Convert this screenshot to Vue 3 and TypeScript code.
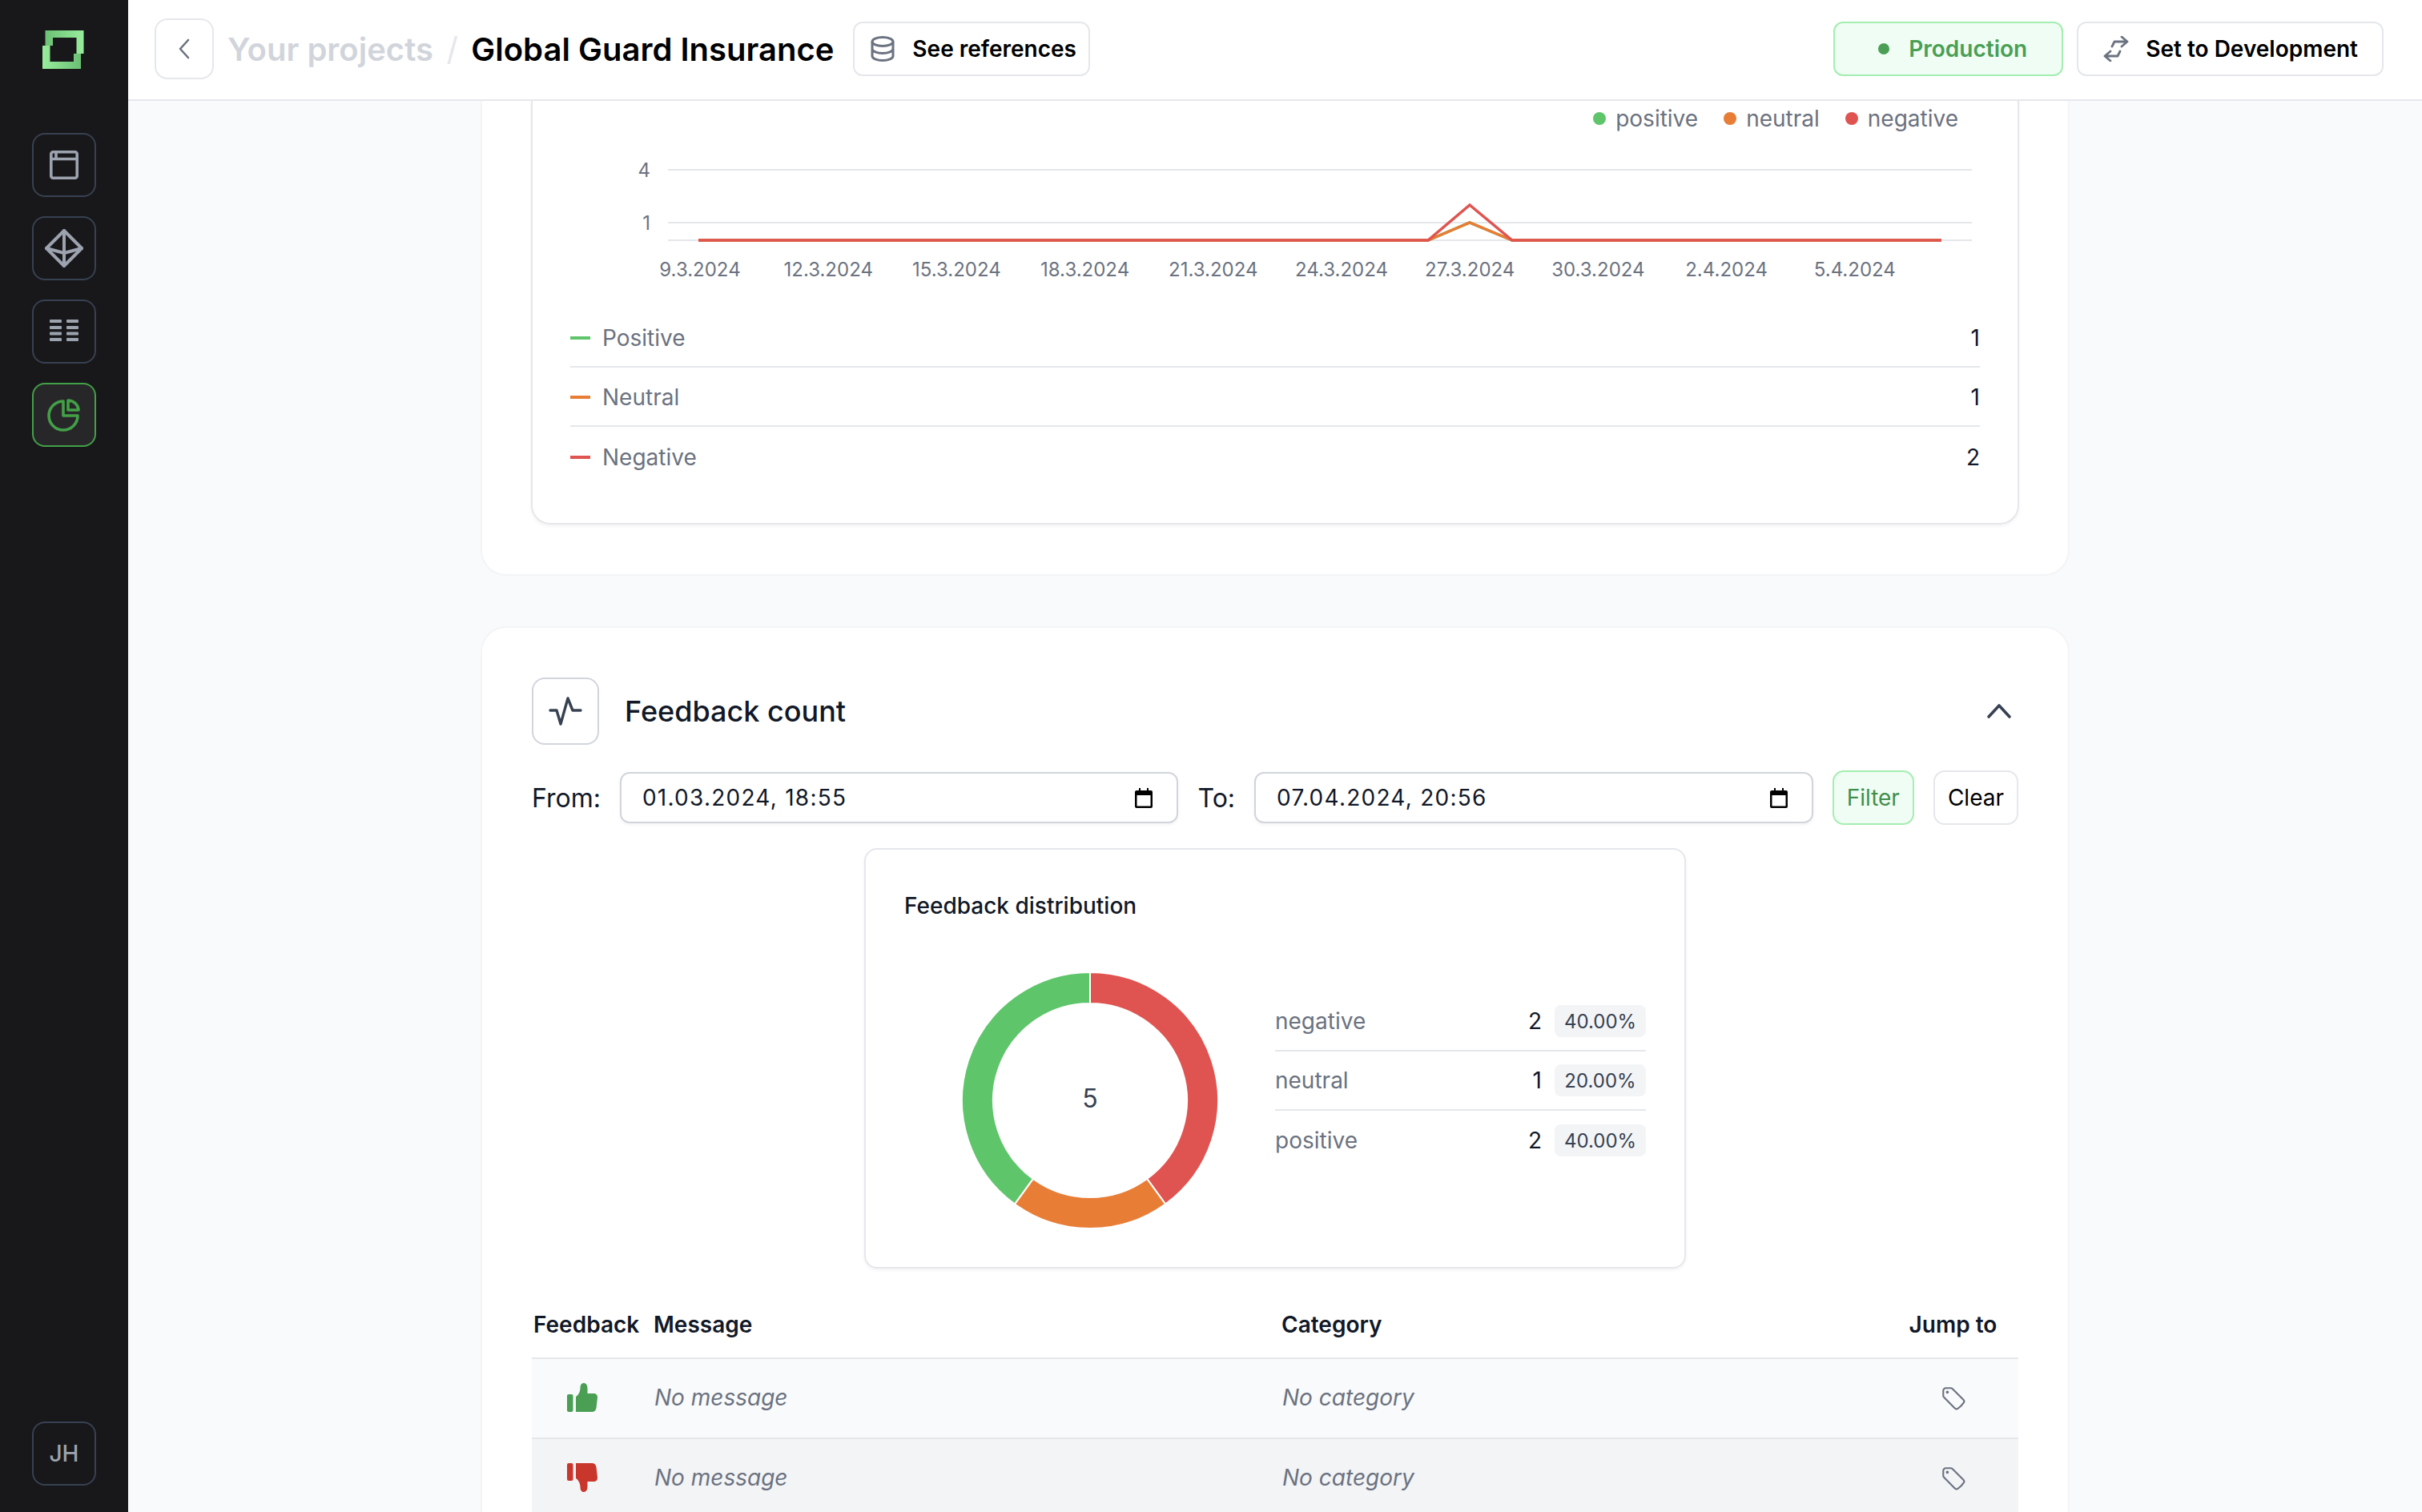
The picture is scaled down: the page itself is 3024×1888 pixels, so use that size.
<script setup lang="ts">
interface Sentiment { label: string; name: string; color: string; count: number }

const sentiments: Sentiment[] = [
  { label: 'Positive', name: 'positive', color: '#5fc56b', count: 1 },
  { label: 'Neutral', name: 'neutral', color: '#e87d36', count: 1 },
  { label: 'Negative', name: 'negative', color: '#df5450', count: 2 },
]

const ticks = ['9.3.2024', '12.3.2024', '15.3.2024', '18.3.2024', '21.3.2024', '24.3.2024', '27.3.2024', '30.3.2024', '2.4.2024', '5.4.2024']
const tickX = (i: number) => 162 + i * 160.2

const distribution = [
  { name: 'negative', count: 2, pct: '40.00%' },
  { name: 'neutral', count: 1, pct: '20.00%' },
  { name: 'positive', count: 2, pct: '40.00%' },
]

// donut segments, clockwise from 12 o'clock
function arc(from: number, to: number) {
  const R = 160
  const r = 121
  const p = (a: number, l: number) => {
    const t = ((a - 90) * Math.PI) / 180
    return `${(160 + l * Math.cos(t)).toFixed(2)} ${(160 + l * Math.sin(t)).toFixed(2)}`
  }
  const big = to - from > 180 ? 1 : 0
  return `M${p(from, R)} A${R} ${R} 0 ${big} 1 ${p(to, R)} L${p(to, r)} A${r} ${r} 0 ${big} 0 ${p(from, r)} Z`
}
const segments = [
  { color: '#df5450', d: arc(0, 144) },
  { color: '#e87d36', d: arc(144, 216) },
  { color: '#5fc56b', d: arc(216, 360) },
]

const feedback = [
  { up: true },
  { up: false },
]
</script>

<template>
  <div class="app">
    <aside class="sidebar">
      <svg class="logo" width="52" height="48" viewBox="0 0 52 48">
        <defs>
          <linearGradient id="lg1" x1="0" x2="1" y1="0" y2="0">
            <stop offset="0" stop-color="#6cc074" />
            <stop offset="1" stop-color="#98ec9c" />
          </linearGradient>
          <linearGradient id="lg2" x1="0" x2="1" y1="0" y2="0">
            <stop offset="0" stop-color="#98ec9c" />
            <stop offset="1" stop-color="#6cc074" />
          </linearGradient>
        </defs>
        <path fill="url(#lg1)" d="M3.5 0H51.5V29H42.5V9H13V19H3.5Z" />
        <path fill="url(#lg2)" d="M0 19H9.5V39H39V29H48V48H0Z" />
      </svg>
      <nav class="side-nav">
        <button class="side-btn">
          <svg width="36" height="36" viewBox="0 0 36 36" fill="none" stroke="#9ca3af" stroke-width="3.6">
            <rect x="1.8" y="1.8" width="32.4" height="32.4" rx="2.5" />
            <path d="M2 10.5H34M8 2V10" />
          </svg>
        </button>
        <button class="side-btn">
          <svg width="48" height="48" viewBox="0 0 48 48" fill="none" stroke="#9ca3af" stroke-width="4" stroke-linejoin="round" stroke-linecap="round">
            <path d="M24 2L46 24L24 46L2 24Z" />
            <path d="M24 2V46M2 24L24 30L46 24" />
          </svg>
        </button>
        <button class="side-btn">
          <svg width="36" height="30" viewBox="0 0 36 30" fill="#9ca3af">
            <rect v-for="y in [0, 8, 15.5, 23]" :key="y" x="0" :y="y" width="15" height="4" rx="1" />
            <rect v-for="y in [0, 8, 15.5, 23]" :key="'r' + y" x="21" :y="y" width="15" height="4" rx="1" />
          </svg>
        </button>
        <button class="side-btn active">
          <svg width="42" height="42" viewBox="0 0 42 42" fill="none" stroke="#43a047" stroke-width="3.6" stroke-linejoin="round" stroke-linecap="round">
            <path d="M20 4A18 18 0 1 0 38 22H20V4Z" />
            <path d="M26 3V15H39A13 13 0 0 0 26 3Z" />
          </svg>
        </button>
      </nav>
      <button class="side-btn avatar">JH</button>
    </aside>

    <div class="main">
      <header class="topbar">
        <button class="back-btn">
          <svg width="14" height="26" viewBox="0 0 14 26" fill="none" stroke="#6b7280" stroke-width="2.6" stroke-linecap="round" stroke-linejoin="round">
            <path d="M12 2L2 13L12 24" />
          </svg>
        </button>
        <div class="crumbs">
          <span class="crumb-muted">Your projects</span>
          <span class="crumb-sep">/</span>
          <span class="crumb-current">Global Guard Insurance</span>
        </div>
        <button class="btn btn-refs">
          <svg width="30" height="32" viewBox="0 0 30 32" fill="none" stroke="#6b7280" stroke-width="3">
            <ellipse cx="15" cy="7" rx="13" ry="5.5" />
            <path d="M2 7V25C2 28 8 30.5 15 30.5S28 28 28 25V7M2 16C2 19 8 21.5 15 21.5S28 19 28 16" />
          </svg>
          See references
        </button>
        <div class="topbar-right">
          <div class="status-pill"><i class="status-dot" />Production</div>
          <button class="btn btn-dev">
            <svg width="32" height="32" viewBox="0 0 32 32" fill="none" stroke="#6b7280" stroke-width="2.8" stroke-linecap="round" stroke-linejoin="round">
              <path d="M11 13L14 7H30M23 1L30 7L23 13" />
              <path d="M21 19L18 25H2M9 19L2 25L9 31" />
            </svg>
            Set to Development
          </button>
        </div>
      </header>

      <div class="content">
        <section class="card card-clipped">
          <div class="chart-card">
            <div class="legend">
              <span v-for="s in sentiments" :key="s.name" class="legend-item">
                <i class="legend-dot" :style="{ background: s.color }" />{{ s.name }}
              </span>
            </div>
            <svg class="line-chart" width="1760" height="217" viewBox="0 0 1760 217">
              <g stroke="#e5e7eb" stroke-width="2">
                <line x1="122" x2="1750" y1="44" y2="44" />
                <line x1="122" x2="1750" y1="110" y2="110" />
                <line x1="122" x2="1750" y1="132" y2="132" />
              </g>
              <g class="axis-text">
                <text x="100" y="53" text-anchor="end">4</text>
                <text x="100" y="119" text-anchor="end">1</text>
                <text v-for="(t, i) in ticks" :key="t" :x="tickX(i)" y="177" text-anchor="middle">{{ t }}</text>
              </g>
              <polyline points="160,132 1071,132 1123,110 1176,132 1712,132" fill="none" stroke="#5fc56b" stroke-width="3.5" />
              <polyline points="160,132 1071,132 1123,110 1176,132 1712,132" fill="none" stroke="#e87d36" stroke-width="3.5" />
              <polyline points="160,132 1071,132 1123,88 1176,132 1712,132" fill="none" stroke="#df5450" stroke-width="3.5" />
            </svg>
            <ul class="count-list">
              <li v-for="s in sentiments" :key="s.label" class="count-row">
                <i class="count-mark" :style="{ background: s.color }" />
                <span class="count-label">{{ s.label }}</span>
                <span class="count-value">{{ s.count }}</span>
              </li>
            </ul>
          </div>
        </section>

        <section class="card">
          <div class="section-head">
            <span class="section-icon">
              <svg width="42" height="38" viewBox="0 0 42 38" fill="none" stroke="#374151" stroke-width="3.4" stroke-linecap="round" stroke-linejoin="round">
                <path d="M2 18H10L15 35L24 3L30 18H40" />
              </svg>
            </span>
            <h2 class="section-title">Feedback count</h2>
            <svg class="chev" width="32" height="20" viewBox="0 0 32 20" fill="none" stroke="#374151" stroke-width="3.6" stroke-linecap="round" stroke-linejoin="round">
              <path d="M3 17L16 3L29 17" />
            </svg>
          </div>

          <div class="filters">
            <label class="filter-label">From:</label>
            <div class="date-field">
              <span>01.03.2024, 18:55</span>
              <svg width="22" height="25" viewBox="0 0 22 25">
                <path d="M5 0H7V3H15V0H17V3H20A2 2 0 0 1 22 5V23A2 2 0 0 1 20 25H2A2 2 0 0 1 0 23V5A2 2 0 0 1 2 3H5ZM2.5 9V22.5H19.5V9Z" fill="#000" fill-rule="evenodd" />
              </svg>
            </div>
            <label class="filter-label">To:</label>
            <div class="date-field">
              <span>07.04.2024, 20:56</span>
              <svg width="22" height="25" viewBox="0 0 22 25">
                <path d="M5 0H7V3H15V0H17V3H20A2 2 0 0 1 22 5V23A2 2 0 0 1 20 25H2A2 2 0 0 1 0 23V5A2 2 0 0 1 2 3H5ZM2.5 9V22.5H19.5V9Z" fill="#000" fill-rule="evenodd" />
              </svg>
            </div>
            <button class="filter-btn primary">Filter</button>
            <button class="filter-btn">Clear</button>
          </div>

          <div class="dist-card">
            <h3 class="dist-title">Feedback distribution</h3>
            <div class="dist-body">
              <div class="donut">
                <svg width="320" height="320" viewBox="0 0 320 320">
                  <path v-for="s in segments" :key="s.color" :d="s.d" :fill="s.color" stroke="#fff" stroke-width="2" />
                  <text x="160" y="169" text-anchor="middle" class="donut-total">5</text>
                </svg>
              </div>
              <ul class="dist-list">
                <li v-for="d in distribution" :key="d.name" class="dist-row">
                  <span class="dist-name">{{ d.name }}</span>
                  <span class="dist-count">{{ d.count }}</span>
                  <span class="dist-pct">{{ d.pct }}</span>
                </li>
              </ul>
            </div>
          </div>

          <table class="fb-table">
            <colgroup>
              <col style="width: 150px" />
              <col style="width: 784px" />
              <col style="width: 757px" />
              <col style="width: 165px" />
            </colgroup>
            <thead>
              <tr>
                <th>Feedback</th>
                <th>Message</th>
                <th>Category</th>
                <th class="center">Jump to</th>
              </tr>
            </thead>
            <tbody>
              <tr v-for="(f, i) in feedback" :key="i" :class="{ alt: i === 1 }">
                <td class="thumb-cell">
                  <svg :class="{ down: !f.up }" width="38" height="36" viewBox="0 0 38 36" :fill="f.up ? '#4a9f54' : '#c9372c'">
                    <rect x="0" y="14" width="7.5" height="22" rx="2" />
                    <path d="M11 36V17C14 15 16.5 11 16.5 6C16.5 2 18.5 0 21 0C24 0 25.5 3 25.5 7V13H33C36.5 13 38 15 38 18L36.5 31C36 34.5 34 36 31 36Z" />
                  </svg>
                </td>
                <td class="empty">No message</td>
                <td class="empty">No category</td>
                <td class="center">
                  <svg class="tag" width="34" height="34" viewBox="0 0 24 24" fill="none" stroke="#6b7280" stroke-width="1.5" stroke-linecap="round" stroke-linejoin="round">
                    <path d="M9.568 3H5.25A2.25 2.25 0 0 0 3 5.25v4.318c0 .597.237 1.17.659 1.591l9.581 9.581c.699.699 1.78.872 2.607.33a18.095 18.095 0 0 0 5.223-5.223c.542-.827.369-1.908-.33-2.607L11.16 3.66A2.25 2.25 0 0 0 9.568 3Z" />
                    <circle cx="6.6" cy="6.6" r=".8" fill="#6b7280" stroke-width="1" />
                  </svg>
                </td>
              </tr>
            </tbody>
          </table>
        </section>
      </div>
    </div>
  </div>
</template>

<style>
html, body { margin: 0; background: #f9fafb; }
</style>

<style scoped>
.app {
  display: flex;
  width: 100vw;
  height: 100vh;
  overflow: hidden;
  font-family: Inter, "Liberation Sans", sans-serif;
  color: #111827;
}
button { font-family: inherit; cursor: pointer; }

.sidebar {
  flex: 0 0 160px;
  display: flex;
  flex-direction: column;
  align-items: center;
  background: #18181b;
  padding: 38px 0 33px;
  box-sizing: border-box;
}
.logo { margin-left: -2px; }
.side-nav {
  display: flex;
  flex-direction: column;
  gap: 24px;
  margin-top: 80px;
  flex: 1;
}
.side-btn {
  width: 80px;
  height: 80px;
  display: flex;
  align-items: center;
  justify-content: center;
  padding: 0;
  background: transparent;
  border: 2px solid #374151;
  border-radius: 16px;
}
.side-btn.active { background: #27272a; border-color: #43a047; }
.avatar { color: #9ca3af; font-size: 28px; font-weight: 500; }

.main { flex: 1; display: flex; flex-direction: column; min-width: 0; }
.topbar {
  flex: 0 0 126px;
  box-sizing: border-box;
  display: flex;
  align-items: center;
  gap: 17px;
  padding: 0 48px 2px 33px;
  background: #fff;
  border-bottom: 2px solid #e5e7eb;
}
.back-btn {
  width: 74px;
  height: 76px;
  display: flex;
  align-items: center;
  justify-content: center;
  background: #fff;
  border: 2px solid #e5e7eb;
  border-radius: 16px;
}
.crumbs { display: flex; align-items: center; gap: 16.5px; font-size: 40px; font-weight: 600; margin-right: 7px; }
.crumb-muted { color: #d1d5db; }
.crumb-sep { color: #e5e7eb; font-weight: 400; }
.crumb-current { color: #000; }
.btn {
  height: 68px;
  display: flex;
  align-items: center;
  gap: 22px;
  background: #fff;
  border: 2px solid #e5e7eb;
  border-radius: 12px;
  font-size: 28px;
  font-weight: 600;
  color: #000;
}
.btn-refs { padding: 0 15px 0 20px; }
.topbar-right { margin-left: auto; display: flex; gap: 17px; }
.status-pill {
  width: 287px;
  height: 68px;
  box-sizing: border-box;
  display: flex;
  align-items: center;
  justify-content: center;
  gap: 24px;
  padding-left: 11px;
  background: #f0fdf4;
  border: 2px solid #a3eeb0;
  border-radius: 12px;
  font-size: 28px;
  font-weight: 600;
  color: #4a9f54;
}
.status-dot { width: 14px; height: 14px; border-radius: 50%; background: #4a9f54; }
.btn-dev { padding: 0 30px 0 31px; gap: 21px; }

.content {
  flex: 1;
  min-height: 0;
  overflow: hidden;
  display: flex;
  flex-direction: column;
  gap: 63px;
  padding: 0 440px;
}
.card {
  flex: none;
  background: #fff;
  border: 2px solid #f3f4f6;
  border-radius: 32px;
  padding: 62px;
}
.card-clipped { border-top: 0; border-radius: 0 0 32px 32px; padding-top: 0; }
.chart-card {
  margin: 0 -1px;
  border: 2px solid #e5e7eb;
  border-top: 0;
  border-radius: 0 0 24px 24px;
  padding: 2px 47px 46px;
  box-shadow: 0 2px 4px rgba(0, 0, 0, 0.05);
}
.legend {
  display: flex;
  justify-content: flex-end;
  gap: 32px;
  height: 40px;
  padding-right: 27px;
  font-size: 28px;
  color: #6b7280;
}
.legend-item { display: flex; align-items: center; gap: 12px; }
.legend-dot { width: 16px; height: 16px; border-radius: 50%; }
.line-chart { display: block; }
.axis-text { font-size: 24px; fill: #6b7280; }
.count-list { list-style: none; margin: 0; padding: 0; }
.count-row {
  display: flex;
  align-items: center;
  height: 74px;
  box-sizing: border-box;
  padding-top: 2px;
  font-size: 28px;
  border-bottom: 2px solid #e5e7eb;
}
.count-row:last-child { border-bottom: 0; }
.count-mark { width: 25px; height: 4px; margin-right: 15px; }
.count-label { color: #6b7280; }
.count-value { margin-left: auto; color: #111827; }

.section-head { display: flex; align-items: center; }
.section-icon {
  width: 84px;
  height: 84px;
  box-sizing: border-box;
  display: flex;
  align-items: center;
  justify-content: center;
  border: 2px solid #d1d5db;
  border-radius: 16px;
}
.section-title { margin: 0 0 0 32px; font-size: 36px; font-weight: 500; color: #111827; }
.chev { margin-left: auto; margin-right: 8px; }

.filters { display: flex; align-items: center; gap: 24px; margin-top: 32px; }
.filter-label { font-size: 32px; color: #111827; }
.date-field {
  flex: 1;
  height: 64px;
  box-sizing: border-box;
  display: flex;
  align-items: center;
  justify-content: space-between;
  padding: 0 30px 0 26px;
  border: 2px solid #d1d5db;
  border-radius: 12px;
  box-shadow: 0 2px 4px rgba(0, 0, 0, 0.05);
  font-size: 28px;
  letter-spacing: 1.25px;
  color: #111827;
}
.filter-btn {
  height: 68px;
  padding: 0 16px;
  background: #fff;
  border: 2px solid #e5e7eb;
  border-radius: 14px;
  font-size: 28px;
  color: #000;
}
.filter-btn.primary { background: #f0fdf4; border-color: #a3eeb0; color: #3f8f4a; }

.dist-card {
  width: 1026px;
  box-sizing: border-box;
  margin: 29px auto 0;
  padding: 48px;
  border: 2px solid #e5e7eb;
  border-radius: 16px;
  box-shadow: 0 2px 4px rgba(0, 0, 0, 0.05);
}
.dist-title { margin: 0; padding-top: 2px; font-size: 28px; line-height: 40px; font-weight: 500; color: #111827; }
.dist-body { display: grid; grid-template-columns: 1fr 1fr; margin-top: 63px; }
.donut { display: flex; justify-content: center; }
.donut svg { display: block; }
.donut-total { font-size: 32px; fill: #374151; }
.dist-list { list-style: none; margin: 0; padding: 25px 0 0; }
.dist-row {
  height: 74px;
  box-sizing: border-box;
  display: flex;
  align-items: center;
  font-size: 28px;
  border-bottom: 2px solid #e5e7eb;
}
.dist-row:last-child { border-bottom: 0; }
.dist-name { color: #6b7280; }
.dist-count { margin-left: auto; color: #111827; }
.dist-pct {
  width: 114px;
  height: 40px;
  margin-left: 16px;
  display: flex;
  align-items: center;
  justify-content: center;
  background: #f3f4f6;
  border-radius: 8px;
  font-size: 24px;
  color: #374151;
}

.fb-table { width: 100%; table-layout: fixed; border-collapse: collapse; margin-top: 32px; font-size: 28px; }
.fb-table th {
  height: 75px;
  text-align: left;
  font-weight: 600;
  color: #111827;
  padding: 0 0 4px 2px;
  border-bottom: 2px solid #e5e7eb;
}
.fb-table td { height: 96px; padding: 0 0 2px 3px; border-bottom: 2px solid #e5e7eb; background: #f9fafb; }
.fb-table tr.alt td { background: #f3f4f6; }
.fb-table .center { text-align: center; padding-left: 2px; }
.thumb-cell { padding-left: 44px !important; }
.thumb-cell svg { display: block; }
.thumb-cell svg.down { transform: scaleY(-1); }
.empty { font-style: italic; color: #6b7280; }
.tag { display: inline-block; vertical-align: middle; }
</style>
